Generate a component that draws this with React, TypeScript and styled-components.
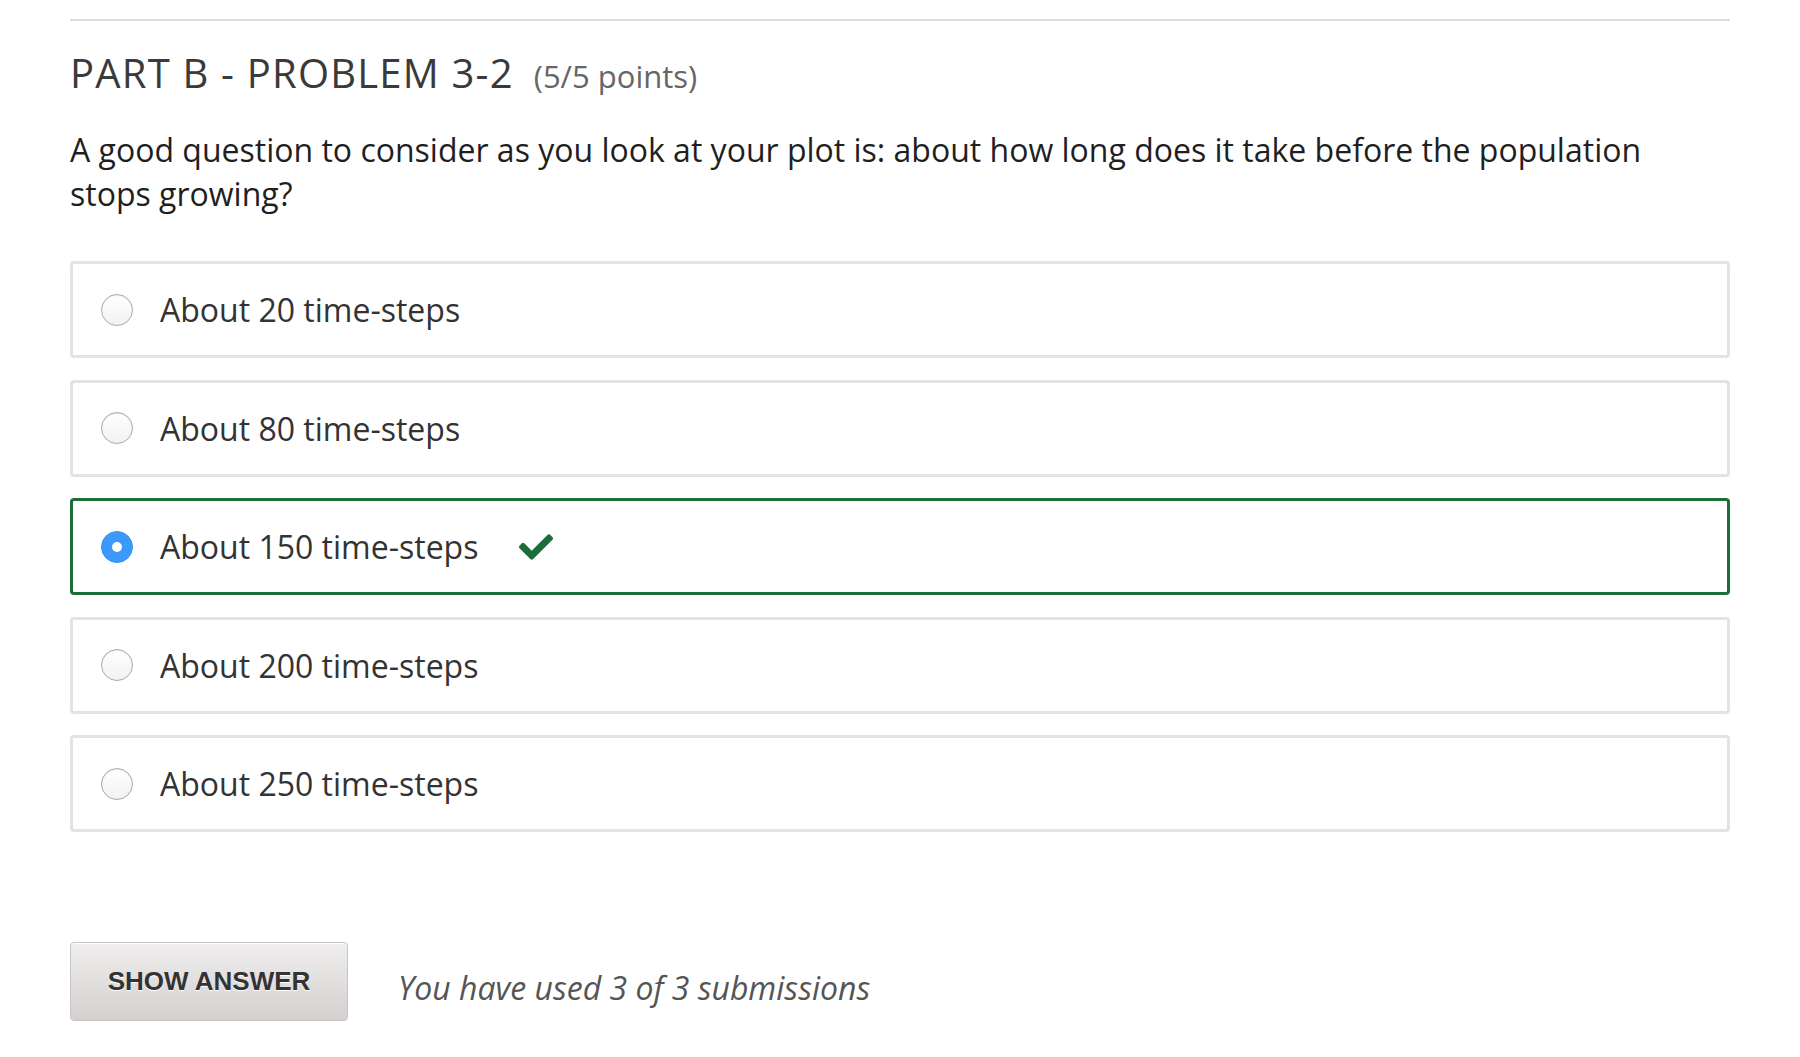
import React from 'react';
import styled, { createGlobalStyle } from 'styled-components';
import { FaCheck } from 'react-icons/fa';

const GlobalStyle = createGlobalStyle`
  body {
    margin: 0;
    background: #ffffff;
    font-family: 'Open Sans', 'Noto Sans', sans-serif;
    color: #333333;
  }
`;

type Choice = {
  label: string;
  selected?: boolean;
  correct?: boolean;
};

const choices: Choice[] = [
  { label: 'About 20 time-steps' },
  { label: 'About 80 time-steps' },
  { label: 'About 150 time-steps', selected: true, correct: true },
  { label: 'About 200 time-steps' },
  { label: 'About 250 time-steps' },
];

const App: React.FC = () => {
  return (
    <>
      <GlobalStyle />
      <Page>
        <Divider />
        <ProblemHeader>
          <Title>PART B - PROBLEM 3-2</Title>
          <Points>(5/5 points)</Points>
        </ProblemHeader>
        <Question>
          A good question to consider as you look at your plot is: about how long does it take before
          the population stops growing?
        </Question>
        <ChoiceList>
          {choices.map((choice) => (
            <ChoiceRow key={choice.label} correct={!!choice.correct}>
              <Radio selected={!!choice.selected} />
              <ChoiceLabel>{choice.label}</ChoiceLabel>
              {choice.correct && (
                <CheckMark>
                  <FaCheck />
                </CheckMark>
              )}
            </ChoiceRow>
          ))}
        </ChoiceList>
        <ActionBar>
          <ShowAnswerButton>SHOW ANSWER</ShowAnswerButton>
          <SubmissionNote>You have used 3 of 3 submissions</SubmissionNote>
        </ActionBar>
      </Page>
    </>
  );
};

const Page = styled.div`
  box-sizing: border-box;
  display: flex;
  flex-direction: column;
  padding: 19px 70px 30px 70px;
  width: 1800px;
`;

const Divider = styled.div`
  background-color: #dddddd;
  height: 2px;
  width: 100%;
`;

const ProblemHeader = styled.div`
  align-items: baseline;
  display: flex;
  gap: 20px;
  margin-top: 28px;
`;

const Title = styled.h3`
  color: #3a3a3a;
  font-size: 40px;
  font-weight: 400;
  letter-spacing: 1.2px;
  line-height: 48px;
  margin: 0;
`;

const Points = styled.span`
  color: #666666;
  font-size: 31px;
`;

const Question = styled.p`
  color: #1f1f1f;
  font-size: 32px;
  line-height: 44px;
  margin: 31px 0 0 0;
`;

const ChoiceList = styled.div`
  display: flex;
  flex-direction: column;
  gap: 21.5px;
  margin-top: 45px;
`;

const ChoiceRow = styled.label<{ correct: boolean }>`
  align-items: center;
  border: 3px solid ${({ correct }) => (correct ? '#1a6e37' : '#e3e3e3')};
  border-radius: 4px;
  box-sizing: border-box;
  display: flex;
  height: 97px;
  padding: 0 28px;
`;

const Radio = styled.span<{ selected: boolean }>`
  border-radius: 50%;
  box-sizing: border-box;
  flex: 0 0 auto;
  height: 32px;
  position: relative;
  width: 32px;
  ${({ selected }) =>
    selected
      ? `
    background: #3b99fc;
    border: 1px solid #3893f5;
    &::after {
      background: #ffffff;
      border-radius: 50%;
      content: '';
      height: 10px;
      left: 50%;
      position: absolute;
      top: 50%;
      transform: translate(-50%, -50%);
      width: 10px;
    }
  `
      : `
    background: linear-gradient(#ffffff, #f2f2f2);
    border: 1.5px solid #a9a9a9;
    box-shadow: inset 0 1px 1px rgba(0, 0, 0, 0.08);
  `}
`;

const ChoiceLabel = styled.span`
  color: #333333;
  font-size: 32px;
  margin-left: 27px;
`;

const CheckMark = styled.span`
  color: #1a6e37;
  display: flex;
  font-size: 34px;
  margin-left: 41px;
`;

const ActionBar = styled.div`
  align-items: center;
  display: flex;
  gap: 50px;
  margin-top: 110px;
`;

const ShowAnswerButton = styled.button`
  background: linear-gradient(#efeded, #d5d0d0);
  border: 1px solid #c9c4c4;
  border-radius: 4px;
  box-shadow: inset 0 1px 0 #ffffff;
  color: #333333;
  font-family: 'Liberation Sans', Arial, sans-serif;
  font-size: 26px;
  font-weight: 700;
  height: 79px;
  text-shadow: 0 1px 0 #ffffff;
  width: 278px;
`;

const SubmissionNote = styled.span`
  color: #555555;
  font-size: 32px;
  font-style: italic;
  margin-top: 12px;
`;

export default App;
